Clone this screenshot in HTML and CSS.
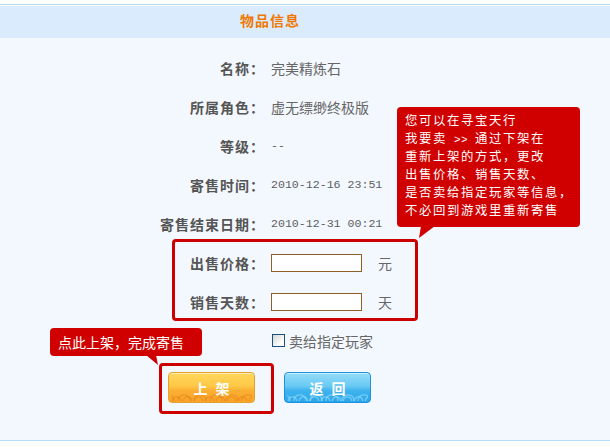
FILE: index.html
```html
<!DOCTYPE html>
<html lang="zh-CN">
<head>
<meta charset="utf-8">
<title>物品信息</title>
<link rel="stylesheet" href="styles.css">
</head>
<body>
<div class="page">
  <div class="header-wrap">
    <div class="header"><h1 class="title">物品信息</h1></div>
  </div>
  <div class="main">
    <div class="form">
      <div class="label">名称：</div>
      <div class="value">完美精炼石</div>

      <div class="label">所属角色：</div>
      <div class="value">虚无缥缈终极版</div>

      <div class="label">等级：</div>
      <div class="value mono">--</div>

      <div class="label">寄售时间：</div>
      <div class="value mono">2010-12-16 23:51</div>

      <div class="label">寄售结束日期：</div>
      <div class="value mono">2010-12-31 00:21</div>

      <div class="label">出售价格：</div>
      <div class="value"><input class="field" type="text" aria-label="出售价格"><span class="unit">元</span></div>

      <div class="label">销售天数：</div>
      <div class="value"><input class="field" type="text" aria-label="销售天数"><span class="unit">天</span></div>

      <div class="label"></div>
      <div class="value"><label class="check"><span class="box"></span>卖给指定玩家</label></div>
    </div>

    <div class="actions">
      <button class="btn btn-orange" type="button"><span>上</span><span>架</span></button>
      <button class="btn btn-blue" type="button"><span>返</span><span>回</span></button>
    </div>
  </div>

  <div class="outline outline-price"></div>
  <div class="outline outline-btn"></div>

  <div class="tip tip-info">
    <div class="tip-line">您可以在寻宝天行</div>
    <div class="tip-line">我要卖<span class="gt"> &gt;&gt; </span>通过下架在</div>
    <div class="tip-line">重新上架的方式，更改</div>
    <div class="tip-line">出售价格、销售天数、</div>
    <div class="tip-line">是否卖给指定玩家等信息，</div>
    <div class="tip-line">不必回到游戏里重新寄售</div>
  </div>
  <div class="tip tip-btn">点此上架，完成寄售</div>
</div>
</body>
</html>
```

FILE: styles.css
```css
* {
  box-sizing: border-box;
}

html,
body {
  margin: 0;
  padding: 0;
  background: #ffffff;
}

body {
  width: 610px;
  height: 447px;
  overflow: hidden;
  font-family: "Noto Sans CJK SC", "Liberation Sans", sans-serif;
  font-size: 14px;
  color: #666666;
}

.page {
  position: relative;
  padding-top: 4px;
}

.header-wrap {
  border-top: 1px solid #b5dbf6;
  padding-top: 1px;
  background: #ffffff;
}

.header {
  height: 32px;
  background: #d9ebfd;
}

.title {
  margin: 0;
  padding-left: 240px;
  font-size: 14px;
  line-height: 28px;
  font-weight: 700;
  letter-spacing: 1px;
  color: #f07800;
}

.main {
  height: 403px;
  padding-top: 10px;
  background: #f3f8fe;
  border-bottom: 1px solid #b5dbf6;
}

.form {
  display: grid;
  grid-template-columns: 265px 1fr;
  grid-auto-rows: 39px;
  column-gap: 6px;
  align-items: center;
}

.label {
  text-align: right;
  font-weight: 700;
  letter-spacing: 1px;
  color: #555555;
  line-height: 20px;
}

.value {
  display: flex;
  align-items: center;
  line-height: 20px;
  color: #666666;
}

.mono {
  font-family: "Liberation Mono", "DejaVu Sans Mono", monospace;
  font-size: 11.6px;
  color: #5e5e5e;
}

.field {
  width: 91px;
  height: 18px;
  margin: 0;
  padding: 0;
  border: 1px solid #8f5d28;
  background: #ffffff;
}

.unit {
  margin-left: 16px;
}

.check {
  display: flex;
  align-items: center;
  gap: 4px;
  margin-left: 1px;
}

.box {
  width: 13px;
  height: 13px;
  border: 1px solid #1c4f7c;
  background: linear-gradient(135deg, #d4d4d0 0%, #ffffff 75%);
}

.actions {
  display: flex;
  gap: 29px;
  padding-left: 168px;
  margin-top: 12px;
}

.btn {
  position: relative;
  overflow: hidden;
  width: 87px;
  height: 31px;
  margin: 0;
  padding: 0;
  display: flex;
  justify-content: center;
  align-items: center;
  gap: 8px;
  border: 1px solid;
  border-radius: 4px;
  font-family: "Noto Sans CJK SC", sans-serif;
  font-size: 14px;
  font-weight: 700;
  color: #ffffff;
  box-shadow: inset 0 1px 0 rgba(255, 255, 255, 0.55);
}

.btn span {
  position: relative;
  z-index: 1;
}

.btn::before {
  content: "";
  position: absolute;
  left: 2px;
  right: 2px;
  bottom: 1px;
  height: 12px;
  background:
    radial-gradient(circle at 50% 100%, transparent 3px, var(--wave) 4px, transparent 5.5px) 0 100% / 11px 9px repeat-x,
    radial-gradient(circle at 50% 100%, transparent 5px, var(--wave) 6px, transparent 7.5px) 5px 100% / 16px 12px repeat-x;
}

.btn-orange {
  --wave: rgba(222, 120, 20, 0.45);
  border-color: #e6a12c;
  background: linear-gradient(#ffd75c 0%, #ffc847 45%, #fbb033 60%, #f8a428 100%);
}

.btn-blue {
  --wave: rgba(160, 225, 252, 0.6);
  border-color: #1f90d9;
  background: linear-gradient(#93dcf8 0%, #6acaf3 45%, #40b3ee 60%, #2aa6ea 100%);
}

.outline {
  position: absolute;
  border: 3px solid #cc0000;
  border-radius: 4px;
}

.outline-price {
  left: 172px;
  top: 239px;
  width: 246px;
  height: 82px;
}

.outline-btn {
  left: 159px;
  top: 363px;
  width: 115px;
  height: 51px;
}

.tip {
  position: absolute;
  background: #d00000;
  color: #ffffff;
  border-radius: 4px;
  white-space: nowrap;
  font-size: 14px;
}

.tip::after {
  content: "";
  position: absolute;
  background: #d00000;
}

.tip-info {
  left: 397px;
  top: 107px;
  width: 183px;
  height: 120px;
  padding: 4px 0 0 8px;
  font-size: 12.4px;
  letter-spacing: 1.6px;
}

.tip-line {
  height: 18px;
  line-height: 18px;
}

.tip-info::after {
  left: 21px;
  top: calc(100% - 1px);
  width: 18px;
  height: 12px;
  clip-path: polygon(3px 0, 17px 0, 1px 12px);
}

.gt {
  font-family: "Liberation Mono", monospace;
  font-size: 11px;
  letter-spacing: 0.4px;
}

.tip-btn {
  left: 50px;
  top: 328px;
  width: 152px;
  height: 28px;
  padding-left: 8px;
  line-height: 28px;
}

.tip-btn::after {
  left: 96px;
  top: calc(100% - 1px);
  width: 13px;
  height: 10px;
  clip-path: polygon(0 0, 10px 0, 12px 10px);
}
```
